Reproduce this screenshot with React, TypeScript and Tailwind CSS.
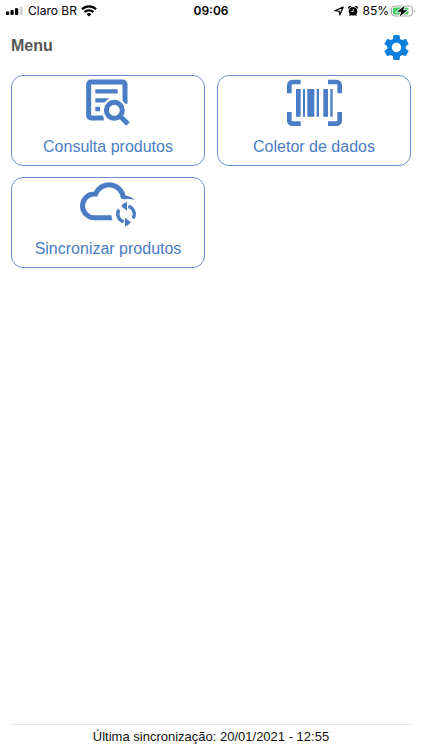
import type { ReactNode } from 'react';
import { MdSettings } from 'react-icons/md';

type MenuItem = {
  label: string;
  icon: ReactNode;
};

function SignalIcon() {
  return (
    <svg className="w-[18px] h-[10px]" viewBox="0 0 18 10" aria-hidden="true">
      <rect x="0" y="5.5" width="3.2" height="3.5" rx="0.8" />
      <rect x="4.5" y="4" width="3.2" height="5" rx="0.8" />
      <rect x="9" y="2.2" width="3.2" height="6.8" rx="0.8" />
      <rect x="13.6" y="0.4" width="3.2" height="8.6" rx="0.8" fill="#d4d4d4" />
    </svg>
  );
}

function WifiIcon() {
  return (
    <svg className="w-4 h-3" viewBox="0 0 16 12" fill="none" stroke="#000" strokeWidth="2.3" aria-hidden="true">
      <path d="M1 4.2a10 10 0 0 1 14 0" />
      <path d="M3.6 7.1a6.3 6.3 0 0 1 8.8 0" />
      <path d="M8 11.6 5.6 9.2a3.5 3.5 0 0 1 4.8 0z" fill="#000" stroke="none" />
    </svg>
  );
}

function LocationIcon() {
  return (
    <svg className="w-[10px] h-[10px]" viewBox="0 0 10 10" fill="none" stroke="#000" strokeWidth="1.2" strokeLinejoin="round" aria-hidden="true">
      <path d="M9.2 1 5.8 9 5.2 5.2.8 4.7z" />
    </svg>
  );
}

function AlarmIcon() {
  return (
    <svg className="w-[10px] h-[10px]" viewBox="0 0 10 10" aria-hidden="true">
      <circle cx="5" cy="5.3" r="4.3" />
      <path d="M.2 2.8A2.2 2.2 0 0 1 3.6.3zM9.8 2.8A2.2 2.2 0 0 0 6.4.3zM1.2 9.9l.6-2.4 2 1.6zM8.8 9.9l-.6-2.4-2 1.6z" />
      <path d="M5.2 3v2.5H3.3" fill="none" stroke="#fff" strokeWidth="0.8" />
    </svg>
  );
}

function BatteryIcon() {
  return (
    <svg className="w-[25px] h-3" viewBox="0 0 25 12" aria-hidden="true">
      <rect x="0.5" y="1" width="21" height="10" rx="3" fill="#fff" stroke="#a3a3a3" />
      <path d="M23 4.5v3a1.7 1.7 0 0 0 0-3z" fill="#a3a3a3" />
      <rect x="2" y="2.5" width="15.5" height="7" rx="1.6" fill="#43cc63" />
      <path d="M13.6 0.8 6 6.8h4.2L8.8 11.4l7.6-6.2h-4.2z" stroke="#fff" strokeWidth="1.6" paintOrder="stroke" />
    </svg>
  );
}

function SearchDocumentIcon() {
  return (
    <svg className="w-11 h-[47px]" viewBox="257 41 132 141" fill="none" stroke="currentColor" strokeWidth="15" aria-hidden="true">
      <path d="M310 158H272a7 7 0 0 1-7-7V57a7 7 0 0 1 7-7h95a7 7 0 0 1 7 7v58" />
      <path d="M285 78h67M285 105h40M285 131h14" strokeWidth="13" />
      <circle cx="342" cy="135" r="38" fill="#fff" stroke="none" />
      <circle cx="342" cy="135" r="24" />
      <path d="m358 151 25 25" />
    </svg>
  );
}

function BarcodeIcon() {
  return (
    <svg className="w-[55px] h-[47px]" viewBox="240 41 165 141" fill="currentColor" aria-hidden="true">
      <g fill="none" stroke="currentColor" strokeWidth="14">
        <path d="M247 84V59a9 9 0 0 1 9-9H281" />
        <path d="M363 50h26a9 9 0 0 1 9 9V84" />
        <path d="M398 140v26a9 9 0 0 1-9 9H363" />
        <path d="M281 175h-25a9 9 0 0 1-9-9V140" />
      </g>
      <path d="M267 71h14v83h-14zM288 71h6v83h-6zM301 71h21v83h-21zM329 71h7v83h-7zM349 71h14v83h-14zM370 71h7v83h-7z" />
    </svg>
  );
}

function CloudSyncIcon() {
  return (
    <svg className="w-14 h-[47px]" viewBox="240 32 168 141" fill="none" stroke="currentColor" strokeWidth="15" aria-hidden="true">
      <path d="M331 142H283a35 35 0 0 1 0-71h4a43 43 0 0 1 83 13" />
      <path d="M365 74q25 1 40 16-14-6-31-3l-10-2z" fill="currentColor" stroke="none" />
      <path d="M328 134.5h6l3 15h-9z" fill="currentColor" stroke="none" />
      <g strokeWidth="10">
        <path d="M357 118a24 24 0 0 0 14 36" />
        <path d="M399 144a24 24 0 0 0-14-36" />
      </g>
      <path d="M375 169V142l18 14q-6 8-18 13zM381 121V94q-12 4-18 13z" fill="currentColor" stroke="none" />
    </svg>
  );
}

const menuItems: MenuItem[] = [
  { label: 'Consulta produtos', icon: <SearchDocumentIcon /> },
  { label: 'Coletor de dados', icon: <BarcodeIcon /> },
  { label: 'Sincronizar produtos', icon: <CloudSyncIcon /> },
];

function StatusBar() {
  return (
    <div className="grid grid-cols-[1fr_auto_1fr] items-center h-[22px] px-[6px] font-[Inter,sans-serif] text-[12px] leading-4 text-black">
      <div className="flex items-center gap-1">
        <SignalIcon />
        <span>Claro BR</span>
        <WifiIcon />
      </div>
      <span className="font-semibold">09:06</span>
      <div className="flex items-center justify-end gap-1">
        <LocationIcon />
        <AlarmIcon />
        <div className="flex items-center gap-[2px]">
          <span>85%</span>
          <BatteryIcon />
        </div>
      </div>
    </div>
  );
}

function MenuCard({ label, icon }: MenuItem) {
  return (
    <button
      type="button"
      className="flex flex-col items-center justify-between h-[91px] pt-[3px] pb-2 rounded-xl border border-[#6b8fcb] bg-white text-[#4a7dc3]"
    >
      {icon}
      <span className="text-base leading-5">{label}</span>
    </button>
  );
}

export default function App() {
  return (
    <div className="min-h-screen flex flex-col bg-white font-['Liberation_Sans',Arial,sans-serif]">
      <StatusBar />

      <header className="flex items-start justify-between h-[53px] pt-[10px] pl-[11px] pr-[10px]">
        <h1 className="py-1 text-base font-bold leading-5 text-[#555555]">Menu</h1>
        <button type="button" aria-label="Configurações" className="text-[#0a80dc]">
          <MdSettings className="size-[31px]" />
        </button>
      </header>

      <main className="grid grid-cols-2 gap-x-3 gap-y-[11px] px-[11px]">
        {menuItems.map((item) => (
          <MenuCard key={item.label} {...item} />
        ))}
      </main>

      <footer className="mt-auto mx-[11px] pt-[2px] pb-1 border-t border-[#e8e8e8] text-center text-[13px] leading-[19px] text-[#111111]">
        Última sincronização: 20/01/2021 - 12:55
      </footer>
    </div>
  );
}
